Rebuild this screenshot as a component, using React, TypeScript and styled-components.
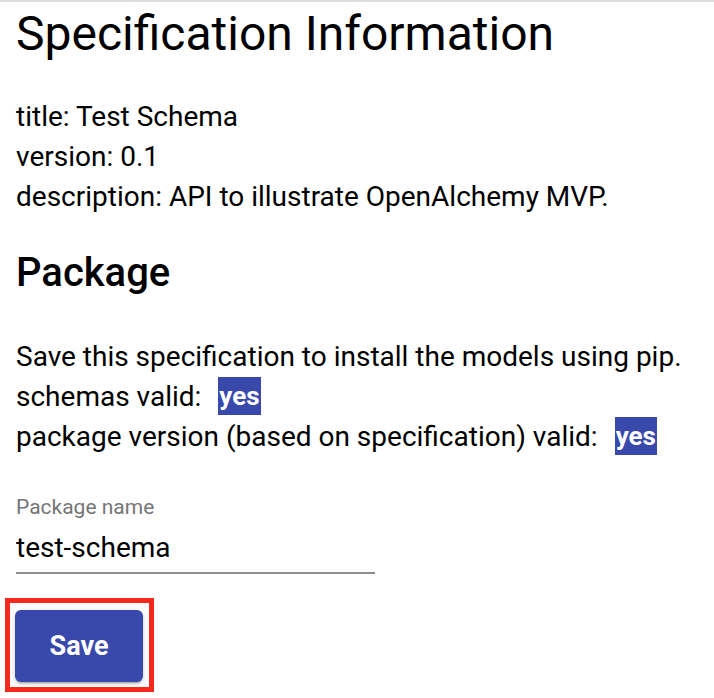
import React from "react";
import styled, { createGlobalStyle } from "styled-components";

const Global = createGlobalStyle`
  html, body { margin: 0; padding: 0; background: #fff; }
  body {
    font-family: Roboto, "Liberation Sans", Arial, sans-serif;
    color: #000;
    border-top: 2px solid #dedede;
  }
`;

const Page = styled.main`
  display: flex;
  flex-direction: column;
  align-items: flex-start;
  padding: 0 16px;
`;

const Title = styled.h1`
  margin: 4px 0 0;
  font-size: 48px;
  font-weight: 400;
  line-height: 56px;
  letter-spacing: 0;
`;

const Info = styled.div<{ $gap: number }>`
  margin-top: ${(p) => p.$gap}px;
  font-size: 28px;
  line-height: 40px;
`;

const Line = styled.div``;

const SubTitle = styled.h2`
  margin: 34px 0 0;
  font-size: 40px;
  font-weight: 500;
  line-height: 44px;
`;

const Badge = styled.span`
  display: inline-block;
  background: #3949ab;
  color: #fff;
  font-size: 26px;
  font-weight: 700;
  height: 38px;
  line-height: 38px;
  padding: 0 1px;
  margin-left: 17px;
  vertical-align: top;
`;

const Field = styled.label`
  display: flex;
  flex-direction: column;
  width: 359px;
  margin-top: 38px;
  border-bottom: 2px solid #8e8e8e;
`;

const FieldLabel = styled.span`
  font-size: 21px;
  line-height: 24px;
  color: #767676;
`;

const Input = styled.input`
  border: none;
  outline: none;
  padding: 0;
  margin: 13px 0 8px;
  font-family: inherit;
  font-size: 28px;
  line-height: 32px;
  height: 32px;
  color: #000;
  background: transparent;
`;

const Highlight = styled.div`
  margin: 24px 0 0 -11px;
  border: 5px solid #f5291c;
  padding: 7px 6px 5px 5px;
`;

const SaveButton = styled.button`
  display: block;
  width: 128px;
  height: 72px;
  border: none;
  border-radius: 6px;
  background: #3949ab;
  color: #fff;
  font-family: inherit;
  font-size: 27px;
  font-weight: 700;
  cursor: pointer;
  box-shadow: 0 3px 2px -2px rgba(0,0,0,0.2), 0 2px 3px 0 rgba(0,0,0,0.14), 0 1px 6px 0 rgba(0,0,0,0.12);
`;

export default function App() {
  return (
    <>
      <Global />
      <Page>
        <Title>Specification Information</Title>
        <Info $gap={35}>
          <Line>title: Test Schema</Line>
          <Line>version: 0.1</Line>
          <Line>description: API to illustrate OpenAlchemy MVP.</Line>
        </Info>
        <SubTitle>Package</SubTitle>
        <Info $gap={42}>
          <Line>Save this specification to install the models using pip.</Line>
          <Line>
            schemas valid:<Badge>yes</Badge>
          </Line>
          <Line>
            package version (based on specification) valid:<Badge>yes</Badge>
          </Line>
        </Info>
        <Field>
          <FieldLabel>Package name</FieldLabel>
          <Input defaultValue="test-schema" />
        </Field>
        <Highlight>
          <SaveButton>Save</SaveButton>
        </Highlight>
      </Page>
    </>
  );
}
